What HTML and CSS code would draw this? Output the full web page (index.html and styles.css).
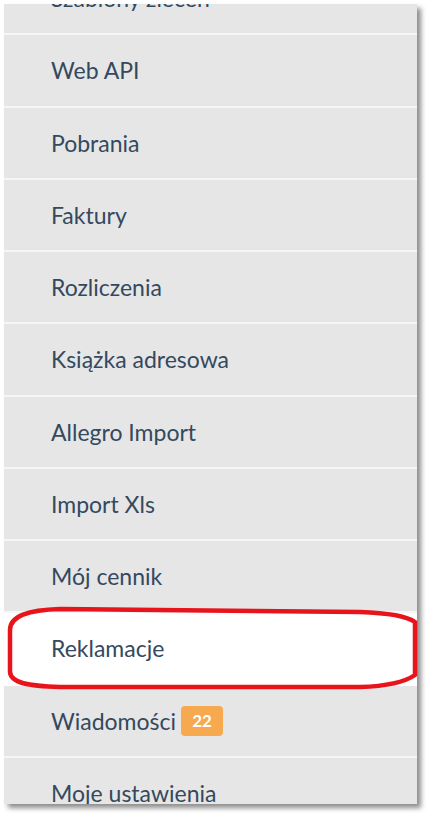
FILE: index.html
```html
<!DOCTYPE html>
<html lang="pl">
<head>
<meta charset="utf-8">
<title>Menu</title>
<link rel="stylesheet" href="styles.css">
</head>
<body>
<div class="shot">
  <ul class="menu">
    <li class="item">Szablony zleceń</li>
    <li class="item">Web API</li>
    <li class="item">Pobrania</li>
    <li class="item">Faktury</li>
    <li class="item">Rozliczenia</li>
    <li class="item">Książka adresowa</li>
    <li class="item">Allegro Import</li>
    <li class="item">Import Xls</li>
    <li class="item">Mój cennik</li>
    <li class="item active">Reklamacje</li>
    <li class="item">Wiadomości <span class="badge">22</span></li>
    <li class="item">Moje ustawienia</li>
  </ul>
</div>
<svg class="mark" width="430" height="815" viewBox="0 0 430 815">
  <path d="M 10 630 C 10 616, 28 610, 60 609 L 360 612 C 390 613, 408 617, 415 622 L 415 675 C 405 682, 390 686, 360 687 L 60 687 C 28 686, 11 683, 10 672 Z" fill="none" stroke="#e8141c" stroke-width="4.5" stroke-linejoin="round"/>
</svg>
</body>
</html>
```
FILE: styles.css
```css
html, body {
  margin: 0;
  padding: 0;
  background: #ffffff;
}
body {
  position: relative;
  width: 430px;
  height: 815px;
  overflow: hidden;
  font-family: Lato, "Open Sans", "DejaVu Sans", sans-serif;
}
.shot {
  margin: 4px 0 0 4px;
  width: 413px;
  height: 800px;
  overflow: hidden;
  background: #e6e6e6;
  box-shadow: 4px 4px 5px rgba(0, 0, 0, 0.45);
}
.menu {
  list-style: none;
  margin: -41px 0 0 0;
  padding: 0;
}
.item {
  box-sizing: border-box;
  height: 72.25px;
  border-bottom: 2px solid #f6f6f6;
  padding-left: 47px;
  display: flex;
  align-items: center;
  font-size: 23px;
  color: #34495e;
  background: #e6e6e6;
}
.item.active {
  background: #ffffff;
  border-bottom-color: #ffffff;
}
.badge {
  margin-left: 5px;
  display: inline-flex;
  align-items: center;
  justify-content: center;
  width: 42px;
  height: 30px;
  border-radius: 4px;
  background: #f7a950;
  color: #ffffff;
  font-weight: 700;
  font-size: 17px;
}
.mark {
  position: absolute;
  left: 0;
  top: 0;
  pointer-events: none;
}
```
